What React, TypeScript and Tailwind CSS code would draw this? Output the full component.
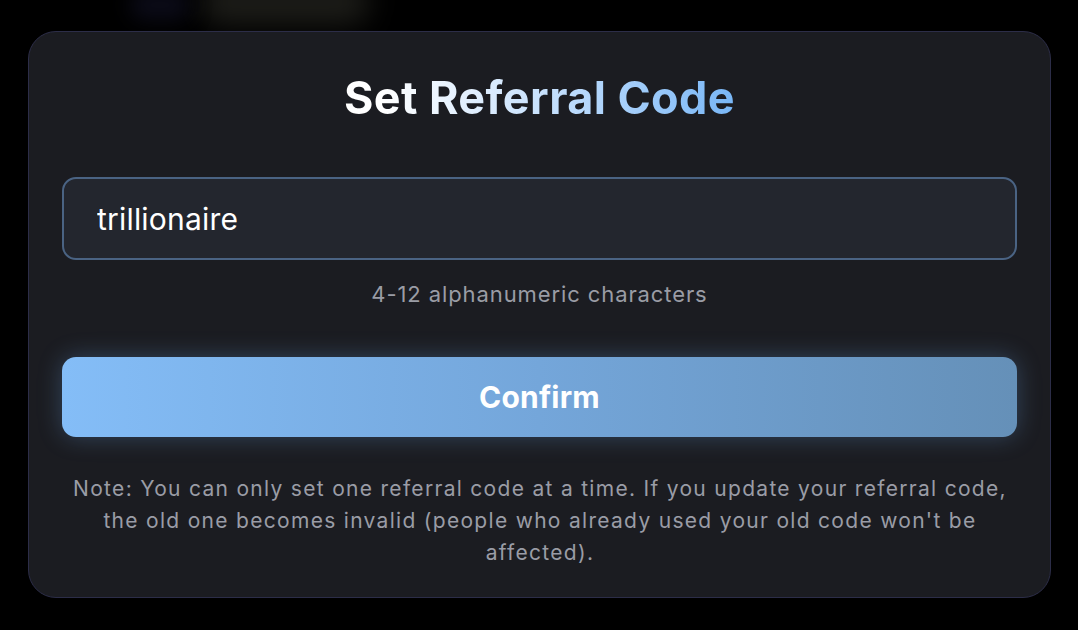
import { useState } from 'react';

export default function App() {
  const [code, setCode] = useState('trillionaire');

  return (
    <div
      className="relative h-[630px] w-[1078px] overflow-hidden bg-black"
      style={{ fontFamily: 'Inter, "Noto Sans", sans-serif' }}
    >
      {/* blurred backdrop shapes */}
      <div className="absolute left-[200px] top-[-20px] h-[45px] w-[170px] rounded-full bg-[#1c1c18] blur-[14px]" />
      <div className="absolute left-[130px] top-[-10px] h-[30px] w-[60px] rounded-full bg-[#0b0b18] blur-[10px]" />

      <div className="relative ml-[28px] mt-[31px] flex h-[567px] w-[1023px] flex-col rounded-[28px] border border-[#2c2d48] bg-[#1b1c21] px-[33px] pt-[44px]">
        {/* Title */}
        <h1 className="text-center text-[45px] font-bold leading-[44px] tracking-[0.4px]">
          <span className="bg-gradient-to-r from-[#ffffff] from-10% via-[#c9e2fd] via-50% to-[#78b6f6] bg-clip-text text-transparent">
            Set Referral Code
          </span>
        </h1>

        {/* Input */}
        <input
          value={code}
          onChange={(e) => setCode(e.target.value)}
          className="mt-[57px] h-[83px] w-full rounded-[14px] border-2 border-[#4a6383] bg-[#23262e] px-[33px] text-[30px] tracking-[0.2px] text-white outline-none"
        />
        <p className="mt-[20px] text-center text-[22px] leading-[28px] tracking-[0.9px] text-[#9a9ca5]">
          4-12 alphanumeric characters
        </p>

        {/* Confirm */}
        <button className="mt-[49px] h-[80px] w-full rounded-[14px] bg-gradient-to-r from-[#84bdf7] via-[#74a6da] to-[#6590b8] text-[30px] font-bold tracking-[0.2px] text-white shadow-[0_0_24px_rgba(110,165,230,0.3)]">
          Confirm
        </button>

        {/* Note */}
        <p className="mx-auto mt-[36px] w-[956px] text-center text-[21px] leading-[32px] tracking-[1.3px] text-[#9a9ca6]">
          Note: You can only set one referral code at a time. If you update your referral code, the old one becomes invalid (people who already used your old code won't be affected).
        </p>
      </div>
    </div>
  );
}
